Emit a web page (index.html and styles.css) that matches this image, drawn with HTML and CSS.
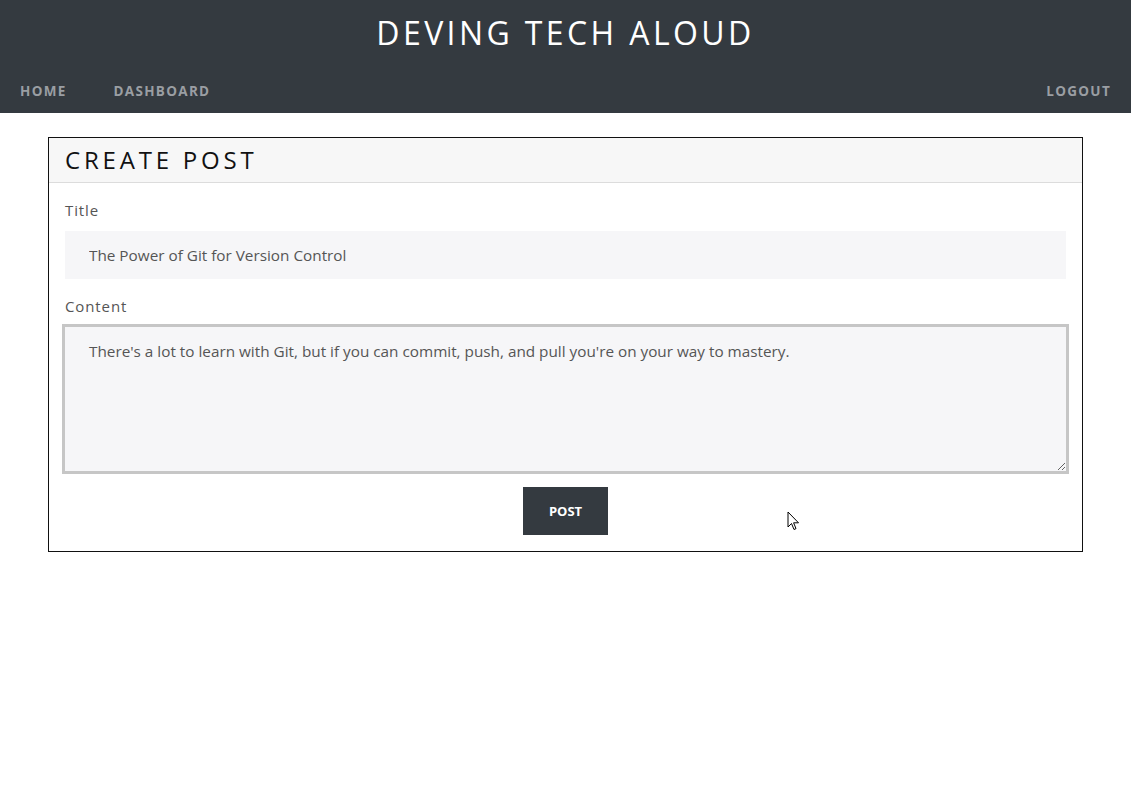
FILE: index.html
```html
<!DOCTYPE html>
<html lang="en">
<head>
    <meta charset="UTF-8">
    <meta name="viewport" content="width=device-width, initial-scale=1.0">
    <title>Deving Tech Aloud</title>
    <link rel="stylesheet" href="styles.css">
</head>
<body>

<header class="site-header">
    <h1 class="site-title">Deving Tech Aloud</h1>
    <nav class="nav">
        <div class="nav-left">
            <a href="#" class="nav-link">Home</a>
            <a href="#" class="nav-link">Dashboard</a>
        </div>
        <a href="#" class="nav-link">Logout</a>
    </nav>
</header>

<main class="container">
    <form class="card">
        <div class="card-header">
            <h2>Create Post</h2>
        </div>
        <div class="card-body">
            <div class="form-group">
                <label for="title">Title</label>
                <input type="text" id="title" name="title" class="field" value="The Power of Git for Version Control">
            </div>
            <div class="form-group">
                <label for="content">Content</label>
                <textarea id="content" name="content" class="field area">There's a lot to learn with Git, but if you can commit, push, and pull you're on your way to mastery.</textarea>
            </div>
            <div class="actions">
                <button type="submit" class="btn">Post</button>
            </div>
        </div>
    </form>
</main>

<svg class="cursor" width="13" height="20" viewBox="0 0 13 20">
    <path d="M1 1 L1 16 L4.5 12.5 L7 18.5 L9 17.6 L6.6 11.8 L11.5 11.8 Z" fill="#fff" stroke="#000" stroke-width="1"/>
</svg>

</body>
</html>
```

FILE: styles.css
```css
body {
    margin: 0;
    font-family: "Open Sans", "Noto Sans", sans-serif;
    background-color: #ffffff;
    color: #555;
}
.site-header {
    background-color: #343a40;
    height: 113px;
}
.site-title {
    margin: 0;
    padding-top: 11px;
    text-align: center;
    color: #ffffff;
    font-size: 32px;
    font-weight: 400;
    letter-spacing: 3.4px;
    text-transform: uppercase;
    line-height: 44px;
}
.nav {
    display: flex;
    justify-content: space-between;
    align-items: center;
    padding: 27px 20px 0 20px;
}
.nav-left {
    display: flex;
    gap: 47px;
}
.nav-link {
    color: #9a9ea3;
    text-decoration: none;
    font-size: 13.5px;
    font-weight: 700;
    letter-spacing: 1.3px;
    text-transform: uppercase;
}
.container {
    padding: 24px 48px;
}
.card {
    border: 1px solid #111;
}
.card-header {
    background-color: #f7f7f7;
    border-bottom: 1px solid #dcdcdc;
    height: 44px;
    padding: 0 16px;
}
.card-header h2 {
    margin: 0;
    font-size: 24px;
    font-weight: 400;
    letter-spacing: 3.8px;
    text-transform: uppercase;
    color: #111;
    line-height: 44px;
}
.card-body {
    padding: 16px;
}
.form-group {
    margin-bottom: 16px;
}
.form-group label {
    display: block;
    font-size: 15px;
    letter-spacing: 0.9px;
    color: #555;
    margin-bottom: 10px;
    line-height: 22px;
}
.field {
    display: block;
    width: 100%;
    box-sizing: border-box;
    background-color: #f6f6f8;
    border: none;
    height: 48px;
    padding: 0 24px;
    font-family: "Open Sans", "Noto Sans", sans-serif;
    font-size: 15.3px;
    color: #555;
    outline: none;
}
.area {
    width: calc(100% + 6px);
    margin: -3px 0 0 -3px;
    height: 150px;
    border: 3px solid #c6c6c6;
    padding: 13px 24px;
    line-height: 22px;
    resize: vertical;
}
.actions {
    display: flex;
    justify-content: center;
    margin-top: -3px;
}
.btn {
    background-color: #343a40;
    color: #ffffff;
    border: none;
    width: 85px;
    height: 48px;
    font-family: "Open Sans", "Noto Sans", sans-serif;
    font-size: 13px;
    font-weight: 700;
    text-transform: uppercase;
}
.cursor {
    position: absolute;
    left: 787px;
    top: 511px;
}
```
